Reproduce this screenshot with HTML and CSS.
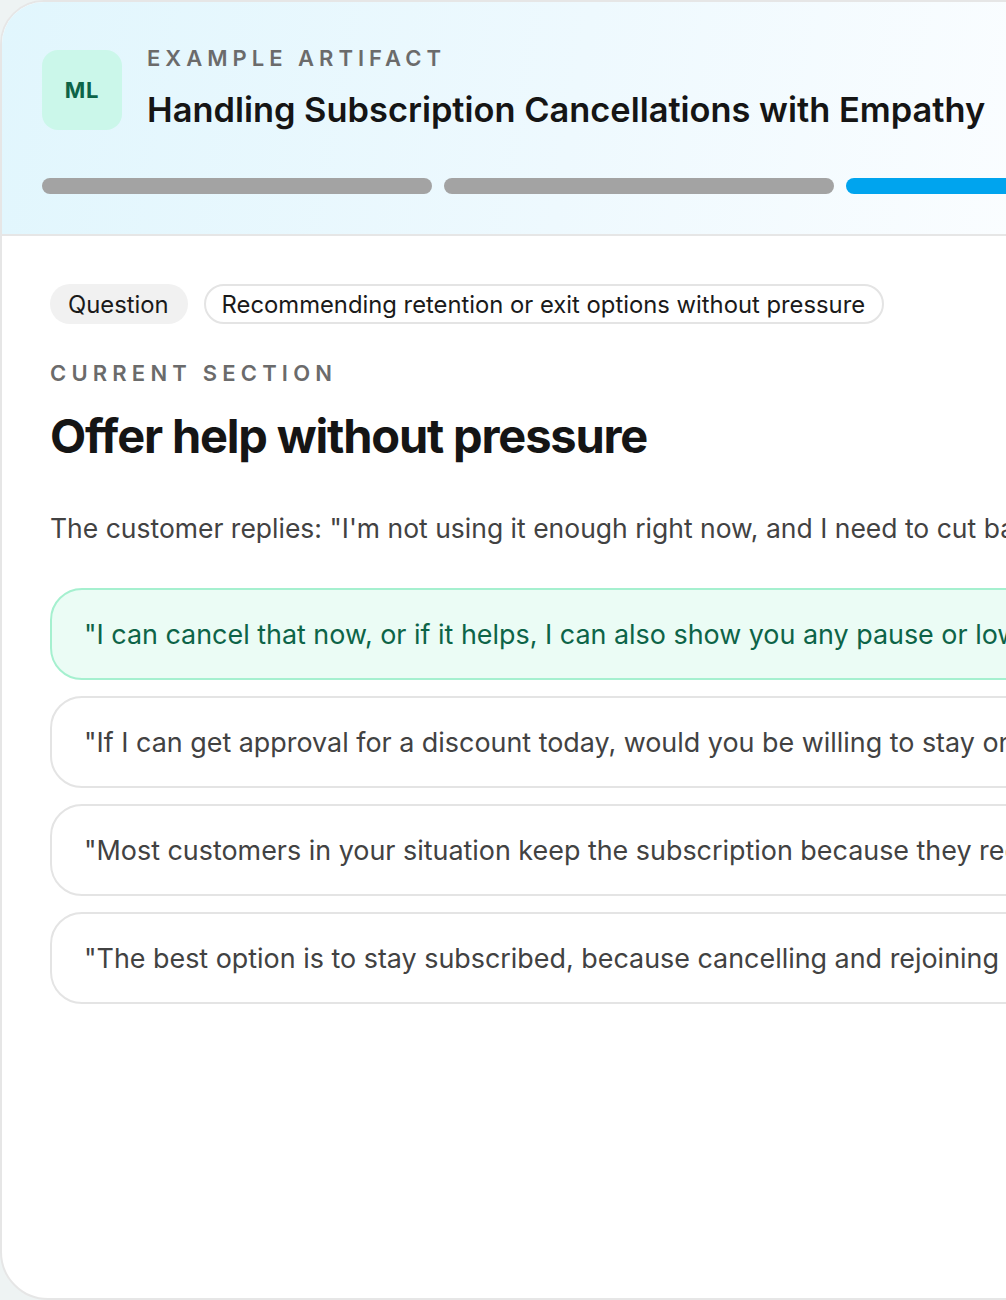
FILE: index.html
```html
<!DOCTYPE html>
<html lang="en">
<head>
<meta charset="utf-8">
<title>Handling Subscription Cancellations with Empathy</title>
<link rel="stylesheet" href="styles.css">
</head>
<body>
<div class="card">
  <header class="hero">
    <div class="hero-top">
      <div class="avatar">ML</div>
      <div class="titles">
        <div class="eyebrow">Example Artifact</div>
        <h1 class="title">Handling Subscription Cancellations with Empathy</h1>
      </div>
    </div>
    <div class="progress">
      <span class="seg done"></span>
      <span class="seg done"></span>
      <span class="seg active"></span>
    </div>
  </header>
  <main class="content">
    <div class="chips">
      <span class="chip chip-filled">Question</span>
      <span class="chip chip-outline">Recommending retention or exit options without pressure</span>
    </div>
    <div class="eyebrow section-label">Current Section</div>
    <h2 class="section-title">Offer help without pressure</h2>
    <p class="prompt">The customer replies: "I'm not using it enough right now, and I need to cut back on my monthly spending."</p>
    <div class="options">
      <div class="option selected">"I can cancel that now, or if it helps, I can also show you any pause or lower-cost options first."</div>
      <div class="option">"If I can get approval for a discount today, would you be willing to stay on for a few more months?"</div>
      <div class="option">"Most customers in your situation keep the subscription because they regret cancelling later."</div>
      <div class="option">"The best option is to stay subscribed, because cancelling and rejoining later costs more."</div>
    </div>
  </main>
</div>
</body>
</html>
```

FILE: styles.css
```css
html, body {
  margin: 0;
  padding: 0;
  overflow: hidden;
}
body {
  background: #eef3f3;
  font-family: Inter, "Noto Sans", "Liberation Sans", sans-serif;
  color: #1a1a1a;
}
.card {
  box-sizing: border-box;
  width: 1278px;
  height: 1300px;
  border: 2px solid #e6e6e6;
  border-radius: 44px 44px 48px 48px;
  background: #ffffff;
  overflow: hidden;
}
.hero {
  background: linear-gradient(100deg, #e1f6fd 0%, #eef9fe 45%, #fafdff 80%);
  border-bottom: 2px solid #e6e6e6;
  padding: 43px 40px 40px;
}
.hero-top {
  display: flex;
  align-items: flex-start;
  gap: 25px;
}
.avatar {
  width: 80px;
  height: 80px;
  flex: none;
  margin-top: 5px;
  border-radius: 16px;
  background: #cbf7ea;
  color: #0d6448;
  font-weight: 700;
  font-size: 22px;
  letter-spacing: 0.03em;
  display: flex;
  align-items: center;
  justify-content: center;
}
.eyebrow {
  font-size: 22px;
  font-weight: 600;
  letter-spacing: 0.228em;
  text-transform: uppercase;
  color: #6b6b6b;
  line-height: 26px;
}
.title {
  margin: 17px 0 0;
  font-size: 34.4px;
  font-weight: 600;
  line-height: 44px;
  color: #151515;
}
.progress {
  display: flex;
  gap: 12px;
  margin-top: 46px;
}
.seg {
  flex: 1;
  height: 16px;
  border-radius: 8px;
  background: #a3a3a3;
}
.seg.active {
  background: #00a4ee;
}
.content {
  padding: 48px 48px 0;
}
.chips {
  display: flex;
  gap: 16px;
}
.chip {
  box-sizing: border-box;
  height: 40px;
  border-radius: 20px;
  padding: 0 19px 0 18px;
  display: flex;
  align-items: center;
  font-size: 23.8px;
  color: #1a1a1a;
}
.chip-filled {
  background: #f1f1f1;
}
.chip-outline {
  border: 2px solid #e4e4e4;
  background: #fff;
  padding: 0 17px 0 16px;
}
.section-label {
  margin-top: 36px;
  letter-spacing: 0.236em;
}
.section-title {
  margin: 20px 0 0;
  font-size: 47px;
  font-weight: 700;
  line-height: 60px;
  letter-spacing: -0.025em;
  color: #151515;
}
.prompt {
  margin: 44px 0 0;
  font-size: 26.5px;
  line-height: 36px;
  color: #424242;
  white-space: nowrap;
}
.options {
  margin-top: 42px;
  display: flex;
  flex-direction: column;
  gap: 16px;
}
.option {
  box-sizing: border-box;
  height: 92px;
  border: 2px solid #e4e4e4;
  border-radius: 32px;
  padding: 0 32px;
  display: flex;
  align-items: center;
  font-size: 26.9px;
  color: #424242;
  white-space: nowrap;
  background: #fff;
}
.option.selected {
  background: #ebfcf5;
  border-color: #a5f0cf;
  color: #0d6448;
}
```
